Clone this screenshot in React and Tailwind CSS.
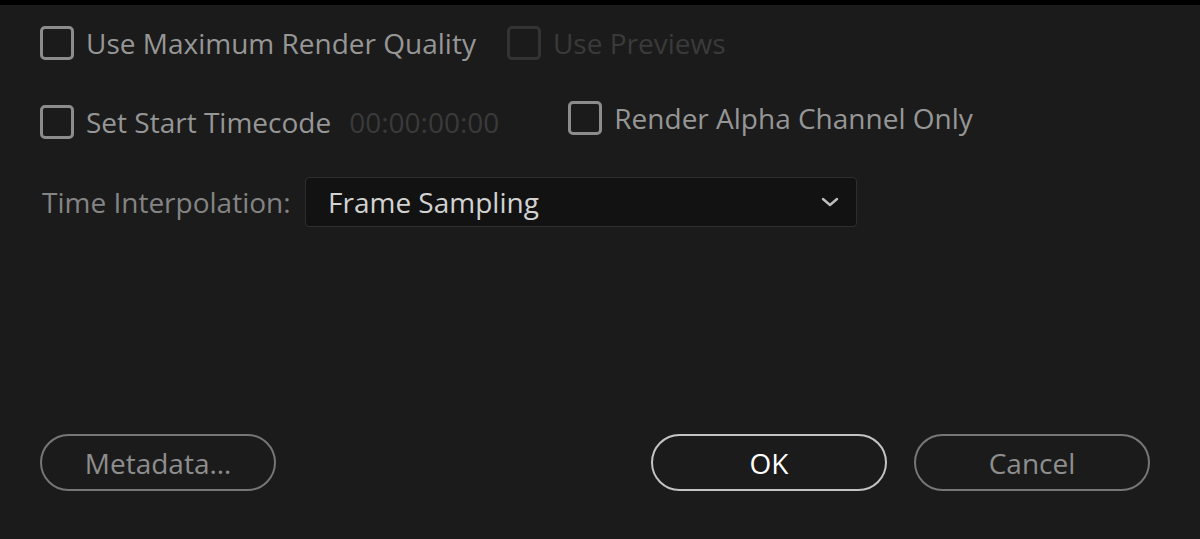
const Checkbox = ({ disabled }) => (
  <span
    className={`inline-block w-[34px] h-[34px] shrink-0 rounded-[5px] border-[3px] ${
      disabled ? "border-[#333333]" : "border-[#8c8c8c]"
    }`}
  />
);

const Check = ({ label, disabled, className = "" }) => (
  <label className={`flex items-center gap-[12px] ${className}`}>
    <Checkbox disabled={disabled} />
    <span className={disabled ? "text-[#3a3a3a]" : "text-[#969696]"}>{label}</span>
  </label>
);

const Pill = ({ children, primary }) => (
  <button
    className={`w-[236px] h-[57px] rounded-full border-2 ${
      primary ? "border-[#c4c4c4] text-white" : "border-[#767676] text-[#8e8e8e]"
    }`}
  >
    {children}
  </button>
);

export default function App() {
  return (
    <div
      className="w-[1200px] h-[539px] bg-[#1b1b1b] border-t-[5px] border-black flex flex-col text-[28px] overflow-hidden"
      style={{ fontFamily: '"Open Sans", sans-serif' }}
    >
      <div className="pl-[40px] pt-[21px] flex flex-col">
        <div className="flex items-center h-[34px]">
          <Check label="Use Maximum Render Quality" />
          <Check label="Use Previews" disabled className="ml-[31px]" />
        </div>
        <div className="flex items-center h-[36px] mt-[41px]">
          <Check label="Set Start Timecode" className="mt-[5px]" />
          <span className="ml-[18px] mt-[5px] text-[#3a3a3a]">00:00:00:00</span>
          <Check label="Render Alpha Channel Only" className="ml-[69px] -mt-[3px]" />
        </div>
        <div className="flex items-center mt-[40px]">
          <span className="ml-[2px] w-[263px] text-[#848484]">Time Interpolation:</span>
          <div className="w-[552px] h-[50px] bg-[#121212] border border-[#2e2e2e] rounded-[4px] flex items-center justify-between pl-[22px] pr-[16px]">
            <span className="text-[#d2d2d2]">Frame Sampling</span>
            <svg width="20" height="12" viewBox="0 0 20 12" fill="none">
              <path d="M3 3l7 6 7-6" stroke="#bdbdbd" strokeWidth="2.4" strokeLinecap="round" strokeLinejoin="round" />
            </svg>
          </div>
        </div>
      </div>
      <div className="mt-auto mb-[48px] px-[40px] flex items-center">
        <Pill>Metadata…</Pill>
        <div className="ml-auto flex gap-[27px] mr-[10px]">
          <Pill primary>OK</Pill>
          <Pill>Cancel</Pill>
        </div>
      </div>
    </div>
  );
}
